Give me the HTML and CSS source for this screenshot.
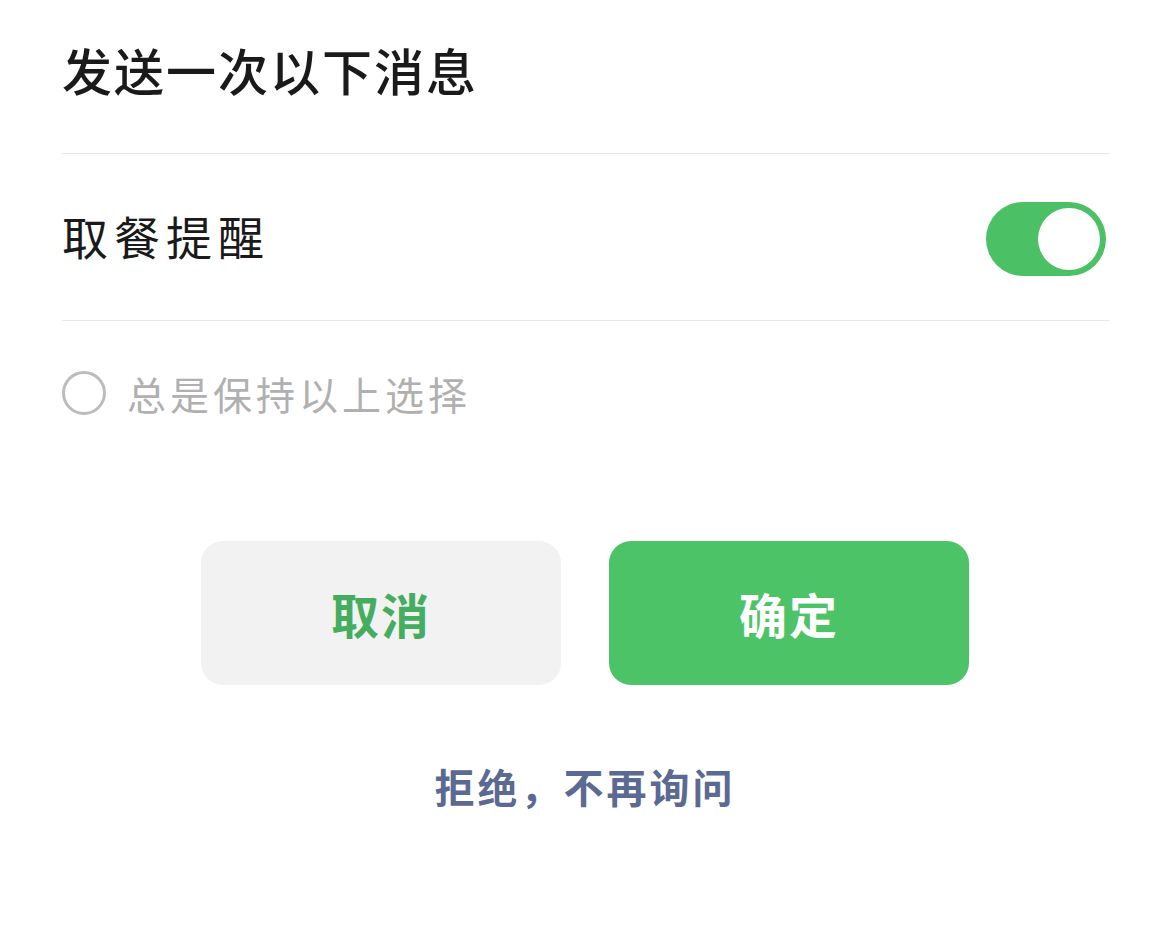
FILE: index.html
```html
<!DOCTYPE html>
<html lang="zh-CN">
<head>
<meta charset="utf-8">
<title>订阅消息</title>
<link rel="stylesheet" href="styles.css">
</head>
<body>
<div class="sheet">
  <div class="title-row">
    <h1 class="title">发送一次以下消息</h1>
  </div>
  <div class="item-row">
    <span class="item-label">取餐提醒</span>
    <span class="switch"><span class="knob"></span></span>
  </div>
  <div class="keep-row">
    <span class="radio"></span>
    <span class="keep-label">总是保持以上选择</span>
  </div>
  <div class="actions">
    <button class="btn btn-cancel">取消</button>
    <button class="btn btn-ok">确定</button>
  </div>
  <div class="reject-row">
    <span class="reject">拒绝，不再询问</span>
  </div>
</div>
</body>
</html>
```
FILE: styles.css
```css
html, body {
  margin: 0;
  padding: 0;
  background: #ffffff;
}
body {
  width: 1170px;
  height: 938px;
  overflow: hidden;
  font-family: "Noto Sans CJK SC", "Noto Sans", sans-serif;
}
.sheet {
  padding: 0 60px 0 62px;
  display: flex;
  flex-direction: column;
}
.title-row {
  height: 154px;
  border-bottom: 1px solid #e8e8e8;
  display: flex;
  align-items: center;
  box-sizing: border-box;
}
.title {
  margin: 0;
  margin-top: -16px;
  font-size: 50px;
  font-weight: 500;
  color: #1a1a1a;
  letter-spacing: 2px;
  line-height: 1;
}
.item-row {
  height: 167px;
  border-bottom: 1px solid #e8e8e8;
  box-sizing: border-box;
  display: flex;
  align-items: center;
  justify-content: space-between;
}
.item-label {
  font-size: 46px;
  color: #1a1a1a;
  letter-spacing: 6px;
  line-height: 1;
  margin-top: -4px;
}
.switch {
  width: 120px;
  height: 74px;
  border-radius: 37px;
  background: #4cc064;
  box-sizing: border-box;
  padding: 6px;
  display: flex;
  justify-content: flex-end;
  align-items: center;
  margin-right: 4px;
  margin-top: 4px;
}
.knob {
  width: 62px;
  height: 62px;
  border-radius: 50%;
  background: #ffffff;
}
.keep-row {
  display: flex;
  align-self: flex-start;
  margin-top: -2px;
  height: 152px;
  align-items: flex-start;
  padding-top: 52px;
  box-sizing: border-box;
}
.radio {
  width: 44px;
  height: 44px;
  border: 3px solid #bcbcbc;
  border-radius: 50%;
  box-sizing: border-box;
  flex: none;
}
.keep-label {
  margin-left: 21px;
  font-size: 39px;
  color: #b0b0b0;
  letter-spacing: 4px;
  line-height: 44px;
}
.actions {
  display: flex;
  justify-content: center;
  gap: 48px;
  margin-top: 70px;
  margin-left: -2px;
}
.btn {
  width: 360px;
  height: 144px;
  border: none;
  border-radius: 22px;
  font-family: "Noto Sans CJK SC", "Noto Sans", sans-serif;
  font-size: 48px;
  font-weight: 700;
  letter-spacing: 2px;
  padding: 0;
}
.btn-cancel {
  background: #f2f2f2;
  color: #45ad5f;
}
.btn-ok {
  background: #4cc366;
  color: #ffffff;
}
.reject-row {
  display: flex;
  justify-content: center;
  margin-top: 81px;
  margin-left: -2px;
}
.reject {
  font-size: 40px;
  font-weight: 700;
  color: #5b6a92;
  letter-spacing: 3px;
  line-height: 1;
}
```
